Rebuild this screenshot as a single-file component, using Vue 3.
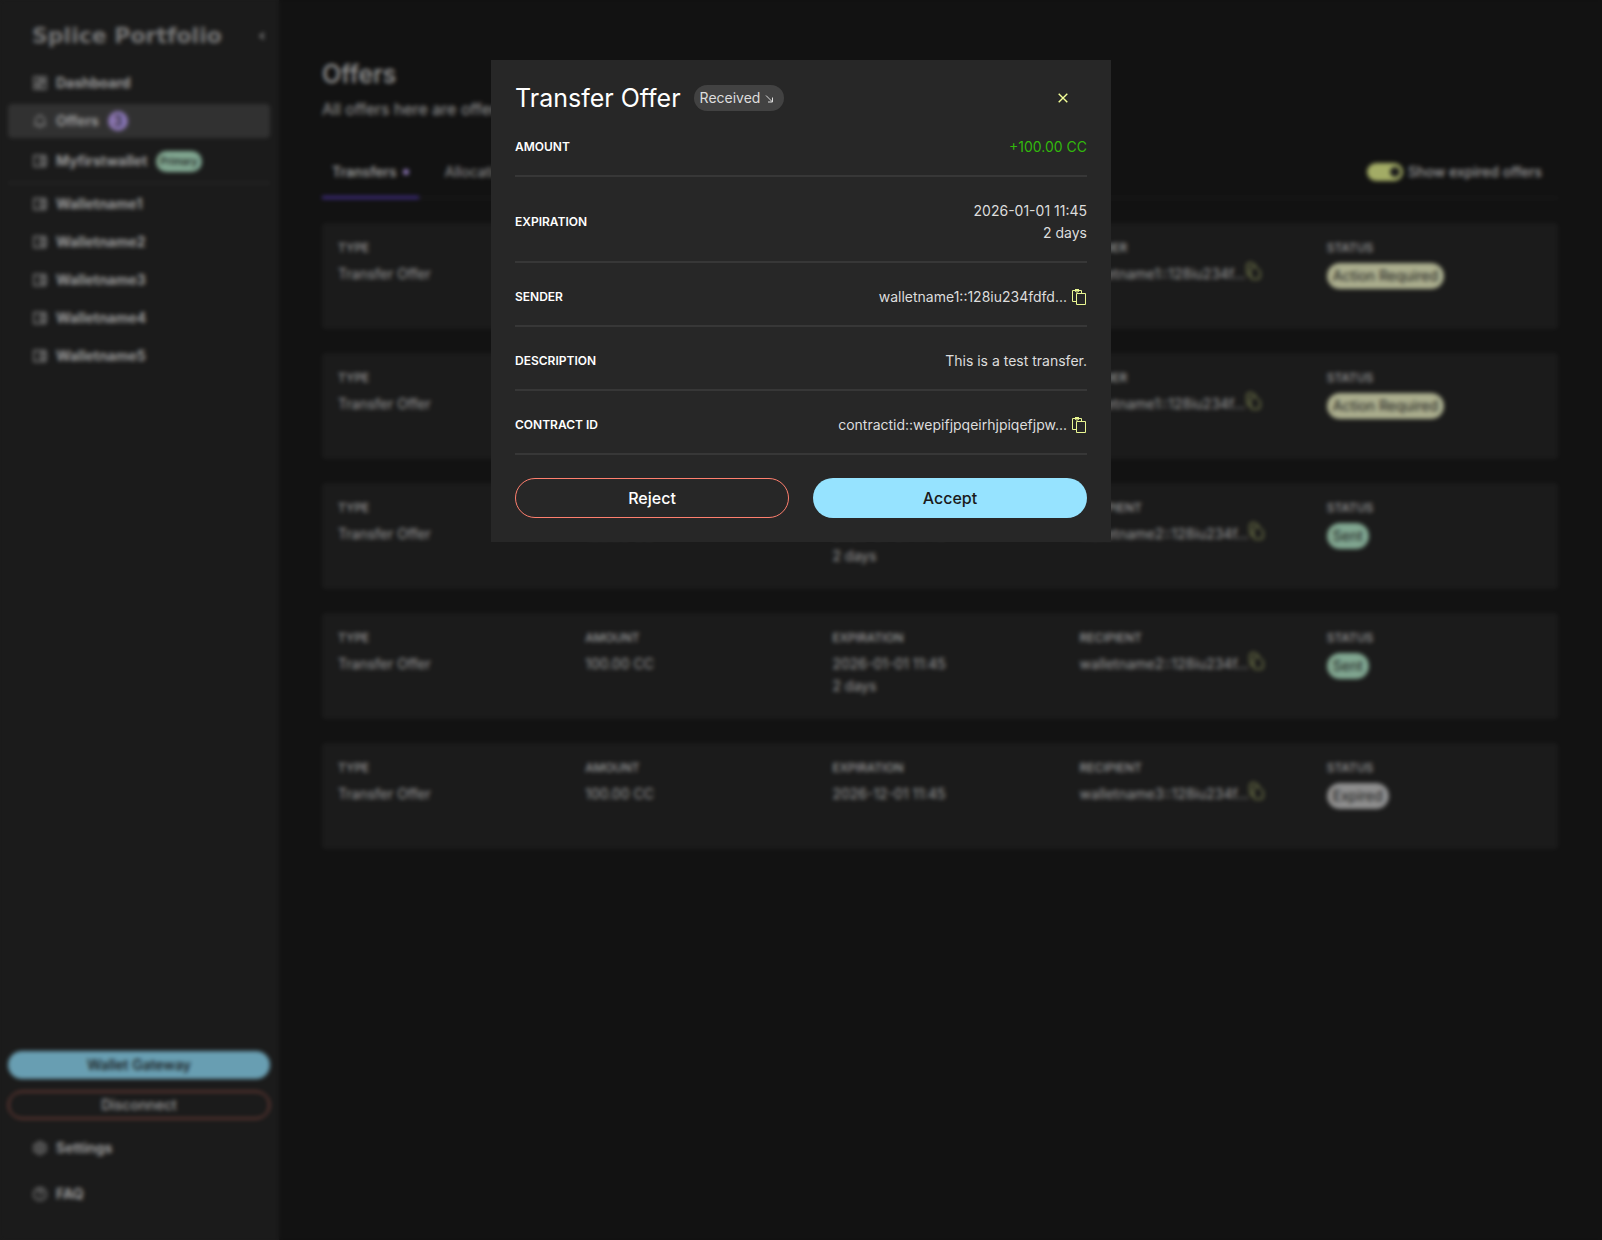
<!-- src/App.vue -->
<template>
  <div class="app">
    <aside class="sidebar">
      <div class="brand">
        <span class="brandName">Splice Portfolio</span>
        <button type="button" class="collapse" aria-label="Collapse sidebar">
          <svg width="6" height="8" viewBox="0 0 6 8"><path d="M5 1 1.5 4 5 7" fill="none" stroke="currentColor" stroke-width="1.6" /></svg>
        </button>
      </div>

      <nav class="nav">
        <a href="#dashboard" class="navItem">
          <svg class="icon" viewBox="0 0 14 14"><path d="M1 1h5v6H1zM8 1h5v3.500H8zM8 6.500h5V13H8zM1 9.500h5V13H1z" /></svg>
          Dashboard
        </a>
        <a href="#offers" class="navItem active">
          <svg class="icon" viewBox="0 0 14 14"><path d="M1 11h12M2.500 11V6.500a4.500 4.500 0 0 1 9 0V11M7 .5v1.500M5.500 13h3" /></svg>
          Offers
          <span class="count">3</span>
        </a>
        <a href="#wallet" class="navItem tall">
          <svg class="icon" viewBox="0 0 14 14"><path d="M1 1.500h11.500v11H1zM7.500 4H13v6H7.500zM9.500 6v2" /></svg>
          Myfirstwallet
          <span class="primaryTag">Primary</span>
        </a>
      </nav>
      <hr class="divider" />
      <nav class="nav">
        <a v-for="w in wallets" :key="w" :href="'#' + w" class="navItem">
          <svg class="icon" viewBox="0 0 14 14"><path d="M1 1.500h11.500v11H1zM7.500 4H13v6H7.500zM9.500 6v2" /></svg>
          {{ w }}
        </a>
      </nav>

      <div class="sideBottom">
        <button type="button" class="sideBtn gateway">Wallet Gateway</button>
        <button type="button" class="sideBtn disconnect">Disconnect</button>
        <a href="#settings" class="navItem">
          <svg class="icon" viewBox="0 0 14 14">
            <path d="M5.600 1h2.800l.5 1.700 1.200.7 1.800-.4 1.300 2.300L12 6.500v1l1.200 1.200L11.900 11l-1.800-.4-1.200.7-.5 1.700H5.600l-.5-1.700-1.200-.7-1.800.4L.8 8.700 2 7.500v-1L.8 5.300 2.100 3l1.800.4 1.200-.7z" />
            <circle cx="7" cy="7" r="2" />
          </svg>
          Settings
        </a>
        <a href="#faq" class="navItem">
          <svg class="icon" viewBox="0 0 14 14"><circle cx="7" cy="7" r="6.300" /><path d="M5 5.500a2 2 0 1 1 2.800 1.800c-.5.2-.8.500-.8 1.200M7 9.800v1.200" /></svg>
          FAQ
        </a>
      </div>
    </aside>

    <main class="main">
      <h1>Offers</h1>
      <p class="lead">All offers here are offers</p>

      <div class="tabs">
        <button type="button" class="tab selected">Transfers <i class="dot"></i></button>
        <button type="button" class="tab">Allocations</button>
        <label class="toggle">
          <input v-model="showExpired" type="checkbox" />
          Show expired offers
        </label>
      </div>

      <div class="offers">
        <dl v-for="o in visibleOffers" :key="o.id" class="offer">
          <div>
            <dt>TYPE</dt>
            <dd>Transfer Offer</dd>
          </div>
          <div>
            <dt>AMOUNT</dt>
            <dd>100.00 CC</dd>
          </div>
          <div>
            <dt>EXPIRATION</dt>
            <dd>{{ o.expires }}</dd>
            <dd v-if="o.left">{{ o.left }}</dd>
          </div>
          <div>
            <dt>{{ o.role }}</dt>
            <dd class="party">
              {{ o.party }}
              <button type="button" class="copy small" aria-label="Copy">
                <svg width="15" height="18" viewBox="0 0 15 18">
                  <path d="M4 13H3a2 2 0 0 1-2-2V3a2 2 0 0 1 2-2h3.500L10 4M6.500 5h3.500L14 9v6a2 2 0 0 1-2 2H6.500a2 2 0 0 1-2-2V7a2 2 0 0 1 2-2z" />
                </svg>
              </button>
            </dd>
          </div>
          <div>
            <dt>STATUS</dt>
            <dd><span class="status" :class="o.kind">{{ o.status }}</span></dd>
          </div>
        </dl>
      </div>
    </main>

    <div v-if="open" class="overlay">
      <section class="modal" role="dialog" aria-labelledby="modalTitle">
        <header class="modalTop">
          <h2 id="modalTitle">Transfer Offer</h2>
          <span class="received">
            Received
            <svg width="9" height="9" viewBox="0 0 9 9"><path d="M1 1.500 7.500 8M3 8h4.500V3.500" fill="none" stroke="currentColor" /></svg>
          </span>
          <button type="button" class="close" aria-label="Close" @click="open = false">
            <svg width="10" height="10" viewBox="0 0 10 10"><path d="m.7.7 8.600 8.600m0-8.600L.7 9.300" fill="none" stroke="currentColor" stroke-width="1.400" /></svg>
          </button>
        </header>

        <dl class="details">
          <div v-for="d in details" :key="d.label" class="detail">
            <dt>{{ d.label }}</dt>
            <dd :class="{ plus: d.plus }">
              <span v-for="line in d.lines" :key="line">{{ line }}</span>
              <button v-if="d.copy" type="button" class="copy" aria-label="Copy">
                <svg width="15" height="16" viewBox="0 0 15 16">
                  <path d="M4 12.500H.5V1.500H9.500V4M3 .5h4M3 1.500l1 1.500h2l1-1.500M4.500 4.500h9v11h-9z" />
                </svg>
              </button>
            </dd>
          </div>
        </dl>

        <div class="actions">
          <button type="button" class="reject" @click="open = false">Reject</button>
          <button type="button" class="accept" @click="open = false">Accept</button>
        </div>
      </section>
    </div>
  </div>
</template>

<script setup>
import { computed, ref } from "vue";

const open = ref(true);
const showExpired = ref(true);

const wallets = ["Walletname1", "Walletname2", "Walletname3", "Walletname4", "Walletname5"];

const offers = ref([
  { id: 1, expires: "2026-01-01 11:45", left: "2 days", role: "SENDER", party: "walletname1::128iu234f...", status: "Action Required", kind: "action" },
  { id: 2, expires: "2026-01-01 11:45", left: "2 days", role: "SENDER", party: "walletname1::128iu234f...", status: "Action Required", kind: "action" },
  { id: 3, expires: "2026-01-01 11:45", left: "2 days", role: "RECIPIENT", party: "walletname2::128iu234f...", status: "Sent", kind: "sent" },
  { id: 4, expires: "2026-01-01 11:45", left: "2 days", role: "RECIPIENT", party: "walletname2::128iu234f...", status: "Sent", kind: "sent" },
  { id: 5, expires: "2026-12-01 11:45", left: "", role: "RECIPIENT", party: "walletname3::128iu234f...", status: "Expired", kind: "expired" },
]);

const visibleOffers = computed(() =>
  offers.value.filter((o) => showExpired.value || o.kind !== "expired")
);

const details = [
  { label: "AMOUNT", lines: ["+100.00 CC"], plus: true },
  { label: "EXPIRATION", lines: ["2026-01-01 11:45", "2 days"] },
  { label: "SENDER", lines: ["walletname1::128iu234fdfd..."], copy: true },
  { label: "DESCRIPTION", lines: ["This is a test transfer."] },
  { label: "CONTRACT ID", lines: ["contractid::wepifjpqeirhjpiqefjpw..."], copy: true },
];
</script>

<style>
body { margin: 0; background: #1a1a1a; }
</style>

<style scoped>
.app { display: flex; min-height: 100vh; background: #1a1a1a; color: #ddd; font: 14px/22px Inter, "Liberation Sans", sans-serif; }
button { font: inherit; color: inherit; background: none; border: 0; padding: 0; cursor: pointer; }
a { color: inherit; text-decoration: none; }
h1, h2, p, dl, dd { margin: 0; }

/* sidebar */
.sidebar { box-sizing: border-box; flex: 0 0 279px; display: flex; flex-direction: column; padding: 8px 9px 8px 8px; background: #272727; }
.brand { display: flex; align-items: center; justify-content: space-between; height: 56px; margin-bottom: 2px; padding: 0 5px 0 24px; }
.brandName { font: bold 22px/56px "DejaVu Sans", sans-serif; color: #aaa; white-space: nowrap; }
.collapse { display: flex; }
.nav { display: grid; gap: 4px; }
.navItem { display: flex; align-items: center; gap: 9px; height: 34px; padding: 0 25px; border-radius: 4px; font-weight: 700; }
.navItem.active { background: #474747; }
.navItem.tall { height: 38px; }
.icon { width: 14px; height: 14px; fill: none; stroke: #bbb; stroke-width: 1.4; }
.count { width: 20px; border-radius: 10px; background: #c5a8ff; color: #272727; font-weight: 400; line-height: 20px; text-align: center; }
.primaryTag { padding: 0 4px; border-radius: 11px; background: #b9efd0; color: #272727; font-size: 10px; font-weight: 500; line-height: 21px; }
.divider { width: 100%; height: 2px; margin: 2px 0 3px; border: 0; background: #373737; }
.sideBottom { display: grid; gap: 12px; margin-top: auto; padding-bottom: 21px; }
.sideBtn { box-sizing: border-box; height: 28px; border-radius: 14px; font-weight: 500; }
.gateway { background: #96e3ff; color: #1a1a1a; }
.disconnect { border: 1px solid #ff7f6e; }

/* offers page */
.main { flex: 1; min-width: 0; padding: 58px 44px 58px 43px; }
h1 { font-size: 25px; font-weight: 500; line-height: 32px; }
.lead { margin-top: 8px; font-size: 16px; }
.tabs { display: flex; box-sizing: border-box; height: 52px; margin-top: 27px; border-bottom: 2px solid #272727; }
.tab { display: flex; align-items: center; gap: 6px; height: 52px; padding: 0 10px; border-bottom: 3px solid transparent; box-sizing: border-box; }
.tab + .tab { margin-left: 16px; }
.tab.selected { border-color: #5a3fb8; font-weight: 600; }
.dot { width: 6px; height: 6px; border-radius: 3px; background: #c5a8ff; }
.toggle { display: flex; align-items: center; gap: 5px; margin-left: auto; padding-right: 16px; font-weight: 500; }
.toggle input { appearance: none; display: flex; align-items: center; box-sizing: border-box; width: 36px; height: 18px; margin: 0; padding: 0 3px; border-radius: 9px; background: #777; }
.toggle input::before { content: ""; width: 10px; height: 10px; border-radius: 5px; background: #272727; }
.toggle input:checked { justify-content: flex-end; background: #eaf792; }
.offers { display: grid; gap: 24px; margin-top: 24px; }
.offer { display: grid; grid-template-columns: repeat(5, 1fr); box-sizing: border-box; min-height: 106px; padding: 14px 0; border-radius: 4px; background: #272727; }
.offer > div { padding-left: 16px; min-width: 0; white-space: nowrap; }
dt { font-size: 12px; font-weight: 500; }
.offer dt { margin-bottom: 4px; }
.party { display: flex; }
.status { display: inline-block; padding: 0 6px; border-radius: 13px; color: #272727; line-height: 26px; }
.status.action { background: #f5f9cb; }
.status.sent { background: #b9efd0; }
.status.expired { background: #ccc; }
.copy { display: inline-flex; align-items: center; }
.copy svg { fill: none; stroke: #eaf792; }
.copy.small { height: 16px; }

/* transfer dialog */
.overlay { position: fixed; inset: 0; padding: 60px 24px; background: rgba(0, 0, 0, 0.3); backdrop-filter: blur(2px); }
.modal { box-sizing: border-box; max-width: 620px; margin: 0 auto; padding: 24px; background: #272727; }
.modalTop { display: flex; align-items: center; gap: 13px; height: 28px; margin-bottom: 1px; }
h2 { color: #fff; font-size: 25px; font-weight: 400; line-height: 28px; }
.received { display: flex; align-items: center; gap: 5px; height: 26px; padding: 0 10px 0 6px; border-radius: 13px; background: #424242; }
.close { display: flex; align-items: center; justify-content: center; width: 48px; height: 28px; margin-left: auto; color: #f3ff97; }
.detail { display: flex; align-items: center; justify-content: space-between; padding: 23px 0 17px; border-bottom: 2px solid #373737; }
.detail dt { color: #fff; font-weight: 600; }
.detail dd { display: flex; gap: 5px; text-align: right; }
.detail dd:not(:has(.copy)) { flex-direction: column; gap: 0; }
.detail .plus { color: #32b80c; }
.actions { display: grid; grid-template-columns: 1fr 1fr; gap: 24px; margin-top: 23px; }
.actions button { box-sizing: border-box; height: 40px; border-radius: 20px; font-size: 16px; font-weight: 500; }
.actions .reject { border: 1px solid #ff7f6e; color: #fff; }
.actions .accept { background: #96e3ff; color: #1a1a1a; }
</style>
